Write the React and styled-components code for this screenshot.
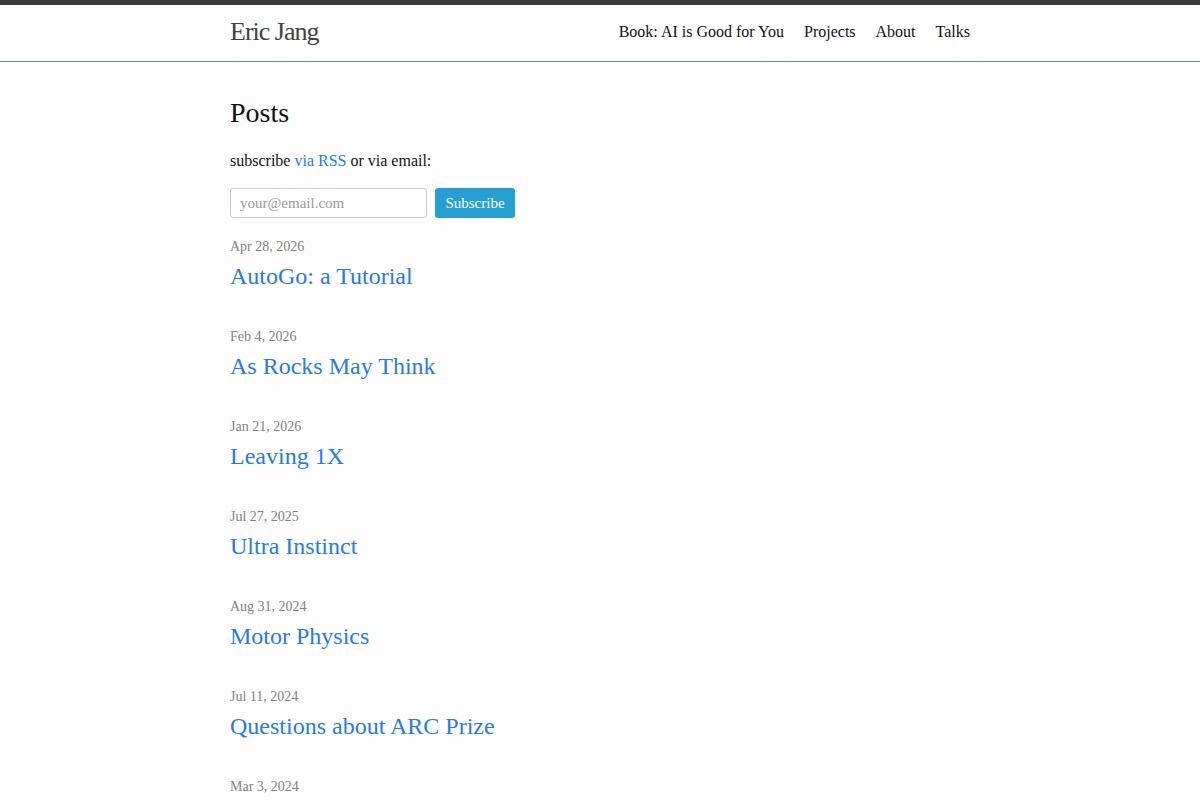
import React from "react";
import styled, { createGlobalStyle } from "styled-components";

const Global = createGlobalStyle`
  html, body {
    margin: 0;
    padding: 0;
    background: #fdfdfd;
  }
  body {
    font-family: "Liberation Serif", "Times New Roman", serif;
    font-size: 16px;
    line-height: 1.5;
    color: #111;
  }
`;

const Header = styled.header`
  border-top: 5px solid #3c3c3c;
  border-bottom: 1px solid #3aa0b8;
`;

const Wrapper = styled.div`
  max-width: 740px;
  margin: 0 auto;
  padding: 0 30px;
`;

const HeaderRow = styled(Wrapper)`
  display: flex;
  justify-content: space-between;
  align-items: flex-start;
  height: 56px;
  line-height: 53px;
`;

const SiteTitle = styled.a`
  font-size: 26px;
  letter-spacing: -1px;
  color: #424242;
  text-decoration: none;
`;

const Nav = styled.nav`
  display: flex;
  gap: 20px;
`;

const NavLink = styled.a`
  color: #111;
  text-decoration: none;
  font-size: 16px;
`;

const Main = styled(Wrapper)`
  padding-top: 30px;
  padding-bottom: 30px;
`;

const Heading = styled.h1`
  font-size: 28px;
  font-weight: 400;
  margin: 0 0 15px;
  line-height: 42px;
`;

const Lead = styled.p`
  margin: 0 0 15px;
  font-size: 16px;
`;

const Link = styled.a`
  color: #2a7ae2;
  text-decoration: none;
`;

const Form = styled.form`
  display: flex;
  gap: 8px;
  margin-bottom: 17px;
`;

const EmailInput = styled.input`
  box-sizing: border-box;
  width: 197px;
  height: 30px;
  padding: 0 9px;
  border: 1px solid #ccc;
  border-radius: 3px;
  background: #fff;
  font-family: inherit;
  font-size: 15px;
  &::placeholder {
    color: #999;
  }
`;

const Button = styled.button`
  box-sizing: border-box;
  height: 30px;
  width: 80px;
  border: none;
  border-radius: 3px;
  background: #26a0d2;
  color: #fff;
  font-family: inherit;
  font-size: 15px;
`;

const PostList = styled.ul`
  list-style: none;
  margin: 0;
  padding: 0;
`;

const Post = styled.li`
  margin-bottom: 31px;
`;

const Meta = styled.div`
  font-size: 14px;
  color: #828282;
  line-height: 23px;
`;

const PostTitle = styled.h2`
  margin: 0;
  font-size: 24px;
  font-weight: 400;
  line-height: 36px;
`;

const posts = [
  ["Apr 28, 2026", "AutoGo: a Tutorial"],
  ["Feb 4, 2026", "As Rocks May Think"],
  ["Jan 21, 2026", "Leaving 1X"],
  ["Jul 27, 2025", "Ultra Instinct"],
  ["Aug 31, 2024", "Motor Physics"],
  ["Jul 11, 2024", "Questions about ARC Prize"],
  ["Mar 3, 2024", "How to Understand ML Papers Quickly"],
];

export default function App() {
  return (
    <>
      <Global />
      <Header>
        <HeaderRow>
          <SiteTitle href="#">Eric Jang</SiteTitle>
          <Nav>
            <NavLink href="#">Book: AI is Good for You</NavLink>
            <NavLink href="#">Projects</NavLink>
            <NavLink href="#">About</NavLink>
            <NavLink href="#">Talks</NavLink>
          </Nav>
        </HeaderRow>
      </Header>
      <Main>
        <Heading>Posts</Heading>
        <Lead>
          subscribe <Link href="#">via RSS</Link> or via email:
        </Lead>
        <Form onSubmit={e => e.preventDefault()}>
          <EmailInput placeholder="your@email.com" />
          <Button type="submit">Subscribe</Button>
        </Form>
        <PostList>
          {posts.map(([date, title]) => (
            <Post key={title}>
              <Meta>{date}</Meta>
              <PostTitle>
                <Link href="#">{title}</Link>
              </PostTitle>
            </Post>
          ))}
        </PostList>
      </Main>
    </>
  );
}
